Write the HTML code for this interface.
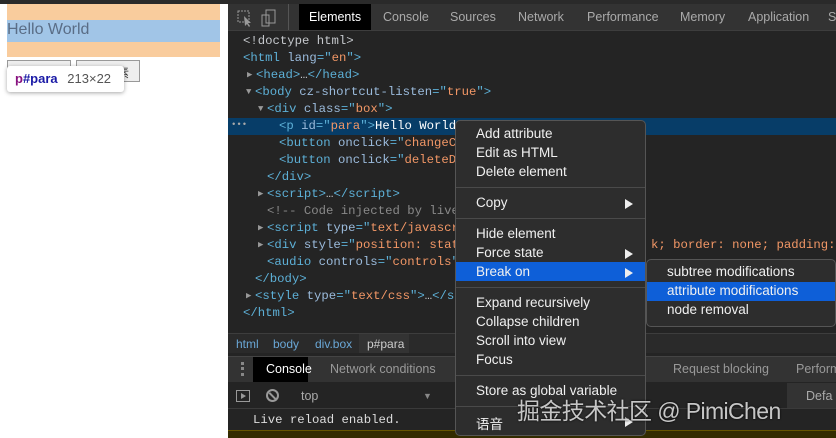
<!DOCTYPE html>
<html><head><style>
*{margin:0;padding:0;box-sizing:border-box}
body{width:836px;height:438px;overflow:hidden;background:#fff;position:relative;font-family:"Liberation Sans","Noto Sans CJK SC",sans-serif}
.a{position:absolute}
.mono{font-family:"Liberation Mono","DejaVu Sans Mono",monospace;font-size:12.3px;white-space:pre;color:#c5c8cc}
.ln{position:absolute;font-family:"Liberation Mono","DejaVu Sans Mono",monospace;font-size:12.3px;white-space:pre;color:#c5c8cc;line-height:17px}
.tr{position:absolute;left:-9px;top:0;color:#999;font-size:9px}
.t{color:#5db0d7}.at{color:#9bbbdc}.v{color:#f29766}.c{color:#898989}
.menu{background:#2d2d2d;border:1px solid #555;border-radius:5px;color:#f0f0f0;font-size:13.5px}
.mi{position:absolute;left:20px}
.sep{position:absolute;left:0;right:0;height:1px;background:#4a4a4a}
.arr{position:absolute;right:12px;width:0;height:0;border-left:8px solid #eee;border-top:5px solid transparent;border-bottom:5px solid transparent}
</style></head><body>
<div class="a" style="left:0;top:0;width:836px;height:4px;background:#2a2a2a"></div>
<!-- page -->
<div class="a" style="left:7px;top:4px;width:213px;height:53px;background:#f9cc9d"></div>
<div class="a" style="left:7px;top:20px;width:213px;height:22px;background:#a1c5e7"></div>
<div class="a" style="left:7px;top:21px;font-size:16px;color:#5a6d86">Hello World</div>
<div class="a" style="left:7px;top:60px;width:64px;height:22px;border:1px solid #999;background:#eee"></div>
<div class="a" style="left:76px;top:60px;width:64px;height:22px;border:1px solid #999;background:#eee;font-size:12px;color:#333;padding:3px 0 0 40px">素</div>
<div class="a" style="left:7px;top:66px;width:117px;height:26px;background:#fff;border-radius:3px;box-shadow:0 1px 4px rgba(0,0,0,.35);font-size:13px;padding:5px 8px"><b style="color:#881280">p</b><b style="color:#1a1aa6">#para</b> <span style="color:#555;margin-left:6px">213×22</span></div>
<!-- devtools -->
<div class="a" style="left:228px;top:4px;width:608px;height:434px;background:#242424"></div>
<div class="a" style="left:228px;top:4px;width:608px;height:27px;background:#333;border-bottom:1px solid #3d3d3d"></div>
<svg class="a" style="left:236px;top:9px" width="40" height="18"><rect x="2" y="2" width="11" height="11" fill="none" stroke="#999" stroke-dasharray="2 1"/><path d="M8 7l7 7-3 0 2 3-1 1-2-3-2 2z" fill="#999"/><rect x="26" y="6" width="7" height="11" fill="none" stroke="#999"/><rect x="30" y="1" width="9" height="13" fill="none" stroke="#999"/></svg>
<div class="a" style="left:288px;top:4px;width:1px;height:26px;background:#555"></div>
<div class="a" style="left:299px;top:4px;width:72px;height:26px;background:#000"></div>
<div class="a" style="font-size:12.5px;color:#aaa;top:10px;left:0;width:836px">
<span class="a" style="left:309px;color:#fff">Elements</span><span class="a" style="left:383px">Console</span><span class="a" style="left:450px">Sources</span><span class="a" style="left:518px">Network</span><span class="a" style="left:587px">Performance</span><span class="a" style="left:680px">Memory</span><span class="a" style="left:748px">Application</span><span class="a" style="left:828px">S</span></div>
<!-- code -->
<div class="a" style="left:228px;top:118px;width:608px;height:17px;background:#073d68"></div>
<div class="a mono" style="left:231px;top:120px;color:#aaa;font-size:9px">•••</div>
<div class="ln" style="left:243px;top:33px">&lt;!doctype html&gt;</div>
<div class="ln" style="left:243px;top:50px"><span class="t">&lt;html <span class="at">lang</span>="<span class="v">en</span>"&gt;</span></div>
<div class="ln" style="left:256px;top:67px"><span class="tr">▶</span><span class="t">&lt;head&gt;</span>…<span class="t">&lt;/head&gt;</span></div>
<div class="ln" style="left:255px;top:84px"><span class="tr">▼</span><span class="t">&lt;body <span class="at">cz-shortcut-listen</span>="<span class="v">true</span>"&gt;</span></div>
<div class="ln" style="left:267px;top:101px"><span class="tr">▼</span><span class="t">&lt;div <span class="at">class</span>="<span class="v">box</span>"&gt;</span></div>
<div class="ln" style="left:279px;top:118px"><span class="t">&lt;p <span class="at">id</span>="<span class="v">para</span>"&gt;</span><span style="color:#fff">Hello World</span></div>
<div class="ln" style="left:279px;top:135px"><span class="t">&lt;button <span class="at">onclick</span>="<span class="v">changeCo</span></span></div>
<div class="ln" style="left:279px;top:152px"><span class="t">&lt;button <span class="at">onclick</span>="<span class="v">deleteDo</span></span></div>
<div class="ln" style="left:267px;top:169px"><span class="t">&lt;/div&gt;</span></div>
<div class="ln" style="left:267px;top:186px"><span class="tr">▶</span><span class="t">&lt;script&gt;</span>…<span class="t">&lt;/script&gt;</span></div>
<div class="ln" style="left:267px;top:203px"><span class="c">&lt;!-- Code injected by live</span></div>
<div class="ln" style="left:267px;top:220px"><span class="tr">▶</span><span class="t">&lt;script <span class="at">type</span>="<span class="v">text/javascr</span></span></div>
<div class="ln" style="left:267px;top:237px"><span class="tr">▶</span><span class="t">&lt;div <span class="at">style</span>="<span class="v">position: stat</span></span></div>
<div class="ln" style="left:651px;top:237px"><span class="v">k; border: none; padding: 0</span></div>
<div class="ln" style="left:267px;top:254px"><span class="t">&lt;audio <span class="at">controls</span>="<span class="v">controls</span>"</span></div>
<div class="ln" style="left:255px;top:271px"><span class="t">&lt;/body&gt;</span></div>
<div class="ln" style="left:255px;top:288px"><span class="tr">▶</span><span class="t">&lt;style <span class="at">type</span>="<span class="v">text/css</span>"&gt;</span>…<span class="t">&lt;/st</span></div>
<div class="ln" style="left:243px;top:305px"><span class="t">&lt;/html&gt;</span></div>
<!-- breadcrumb -->
<div class="a" style="left:228px;top:333px;width:608px;height:20px;background:#2a2a2a;border-top:1px solid #3d3d3d"></div>
<div class="a" style="left:359px;top:334px;width:50px;height:19px;background:#333"></div>
<div class="a" style="top:337px;left:0;font-size:12px;color:#6aa7d6"><span class="a" style="left:236px">html</span><span class="a" style="left:273px">body</span><span class="a" style="left:315px">div.box</span><span class="a" style="left:367px;color:#ccc">p#para</span></div>
<!-- console tabs -->
<div class="a" style="left:228px;top:356px;width:608px;height:26px;background:#333;border-top:1px solid #444"></div>
<div class="a" style="left:241px;top:362px;width:3px;height:14px;border-left:3px dotted #888"></div>
<div class="a" style="left:253px;top:357px;width:55px;height:25px;background:#000;color:#fff;font-size:12.5px;padding:5px 0 0 13px">Console</div>
<div class="a" style="left:330px;top:362px;color:#999;font-size:12.5px">Network conditions</div>
<div class="a" style="left:673px;top:362px;color:#999;font-size:12.5px">Request blocking</div>
<div class="a" style="left:796px;top:362px;color:#999;font-size:12.5px">Perform</div>
<div class="a" style="left:228px;top:383px;width:608px;height:26px;background:#242424;border-bottom:1px solid #3a3a3a"></div>
<div class="a" style="left:236px;top:390px;width:14px;height:12px;border:1px solid #999"></div>
<div class="a" style="left:241px;top:393px;width:0;height:0;border-left:5px solid #999;border-top:3px solid transparent;border-bottom:3px solid transparent"></div>
<div class="a" style="left:266px;top:389px;width:13px;height:13px;border:2px solid #999;border-radius:50%"></div>
<div class="a" style="left:268px;top:395px;width:9px;height:2px;background:#999;transform:rotate(45deg)"></div>
<div class="a" style="left:301px;top:389px;color:#aaa;font-size:12.5px">top</div>
<div class="a" style="left:423px;top:391px;color:#888;font-size:9px">▼</div>
<div class="a" style="left:787px;top:383px;width:49px;height:25px;background:#333"></div>
<div class="a" style="left:806px;top:389px;color:#aaa;font-size:12.5px">Defa</div>
<div class="a mono" style="left:253px;top:413px;color:#ddd">Live reload enabled.</div>
<div class="a" style="left:228px;top:430px;width:608px;height:8px;background:#332b00;border-top:1px solid #665500"></div>
<!-- context menu -->
<div class="a menu" style="left:455px;top:120px;width:191px;height:316px">
<span class="mi" style="top:5px">Add attribute</span>
<span class="mi" style="top:24px">Edit as HTML</span>
<span class="mi" style="top:43px">Delete element</span>
<div class="sep" style="top:66px"></div>
<span class="mi" style="top:74px">Copy</span><div class="arr" style="top:78px"></div>
<div class="sep" style="top:97px"></div>
<span class="mi" style="top:105px">Hide element</span>
<span class="mi" style="top:124px">Force state</span><div class="arr" style="top:128px"></div>
<div class="a" style="left:0;top:141px;width:189px;height:19px;background:#0e5fd8"></div>
<span class="mi" style="top:143px">Break on</span><div class="arr" style="top:147px"></div>
<div class="sep" style="top:166px"></div>
<span class="mi" style="top:174px">Expand recursively</span>
<span class="mi" style="top:193px">Collapse children</span>
<span class="mi" style="top:212px">Scroll into view</span>
<span class="mi" style="top:231px">Focus</span>
<div class="sep" style="top:254px"></div>
<span class="mi" style="top:262px">Store as global variable</span>
<div class="sep" style="top:285px"></div>
<span class="mi" style="top:292px">语音</span><div class="arr" style="top:296px"></div>
</div>
<div class="a menu" style="left:646px;top:259px;width:190px;height:68px">
<span class="mi" style="top:4px">subtree modifications</span>
<div class="a" style="left:0;top:22px;width:188px;height:19px;background:#0e5fd8"></div>
<span class="mi" style="top:23px">attribute modifications</span>
<span class="mi" style="top:42px">node removal</span>
</div>
<div class="a" style="left:517px;top:392px;font-size:23px;letter-spacing:-0.6px;color:rgba(230,230,230,.85);text-shadow:0 0 2px #000">掘金技术社区 @ PimiChen</div>
</body></html>
